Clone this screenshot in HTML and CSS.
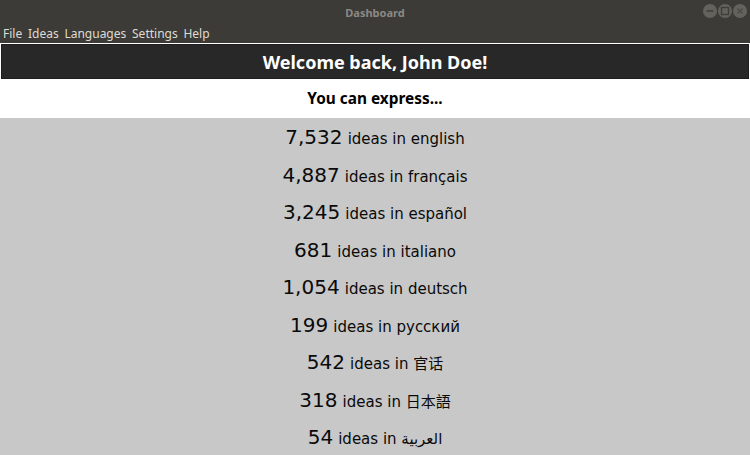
FILE: index.html
```html
<!DOCTYPE html>
<html>
<head>
<meta charset="utf-8">
<link rel="stylesheet" href="styles.css">
</head>
<body>
<div class="window">
  <div class="chrome">
    <div class="titlebar">
      <span class="title">Dashboard</span>
      <div class="controls">
        <span class="btn"><svg width="14" height="14" viewBox="0 0 14 14"><line x1="3.5" y1="7" x2="10.5" y2="7" stroke="#3e3d39" stroke-width="1.4"/></svg></span>
        <span class="btn"><svg width="14" height="14" viewBox="0 0 14 14"><rect x="3.5" y="3.5" width="7" height="7" fill="none" stroke="#3e3d39" stroke-width="1.4"/></svg></span>
        <span class="btn"><svg width="14" height="14" viewBox="0 0 14 14"><path d="M4.5 4.5 L9.5 9.5 M9.5 4.5 L4.5 9.5" stroke="#4a4945" stroke-width="1.2"/></svg></span>
      </div>
    </div>
    <div class="menubar">
      <span>File</span><span>Ideas</span><span>Languages</span><span>Settings</span><span>Help</span>
    </div>
  </div>
  <div class="content">
    <div class="welcome">Welcome back, John Doe!</div>
    <div class="express">You can express...</div>
    <div class="list">
      <div class="row"><span class="num">7,532</span> <span class="lbl">ideas in english</span></div>
      <div class="row"><span class="num">4,887</span> <span class="lbl">ideas in français</span></div>
      <div class="row"><span class="num">3,245</span> <span class="lbl">ideas in español</span></div>
      <div class="row"><span class="num">681</span> <span class="lbl">ideas in italiano</span></div>
      <div class="row"><span class="num">1,054</span> <span class="lbl">ideas in deutsch</span></div>
      <div class="row"><span class="num">199</span> <span class="lbl">ideas in русский</span></div>
      <div class="row"><span class="num">542</span> <span class="lbl">ideas in 官话</span></div>
      <div class="row"><span class="num">318</span> <span class="lbl">ideas in 日本語</span></div>
      <div class="row"><span class="num">54</span> <span class="lbl">ideas in العربية</span></div>
    </div>
  </div>
</div>
</body>
</html>
```

FILE: styles.css
```css
html, body {
  margin: 0;
  padding: 0;
  width: 750px;
  height: 455px;
  overflow: hidden;
}
.window {
  display: flex;
  flex-direction: column;
  height: 455px;
  background: #ffffff;
}
.chrome {
  background: #3c3b37;
  height: 43px;
  display: flex;
  flex-direction: column;
}
.titlebar {
  position: relative;
  height: 23px;
  display: flex;
  align-items: center;
  justify-content: center;
}
.title {
  font-family: "Noto Sans", sans-serif;
  font-weight: bold;
  font-size: 11px;
  color: #8b8984;
  padding-top: 1px;
}
.controls {
  position: absolute;
  right: 3px;
  top: 4px;
  display: flex;
  gap: 1px;
}
.btn {
  width: 14px;
  height: 14px;
  border-radius: 50%;
  background: #64625d;
  display: flex;
}
.menubar {
  display: flex;
  gap: 5.75px;
  padding-left: 3px;
  height: 20px;
  align-items: center;
  font-family: "Noto Sans", sans-serif;
  font-size: 12px;
  color: #dfdbd2;
}
.content {
  display: flex;
  flex-direction: column;
  flex: 1;
  padding-top: 1px;
}
.welcome {
  margin: 0 1px;
  height: 33px;
  border: 1px solid #1e1e1e;
  background: #282828;
  color: #ffffff;
  font-family: "Noto Sans", sans-serif;
  font-weight: bold;
  font-size: 18px;
  display: flex;
  align-items: center;
  justify-content: center;
}
.express {
  height: 39px;
  display: flex;
  align-items: center;
  justify-content: center;
  font-family: "Noto Sans", sans-serif;
  font-weight: bold;
  font-size: 15.4px;
  color: #000;
}
.list {
  flex: 1;
  background: #c8c8c8;
  display: flex;
  flex-direction: column;
  padding-top: 1px;
}
.row {
  height: 37.5px;
  line-height: 37.5px;
  text-align: center;
  font-family: "DejaVu Sans", "Noto Sans CJK SC", sans-serif;
  color: #0a0a0a;
  white-space: nowrap;
}
.num {
  font-size: 20px;
}
.lbl {
  font-size: 15px;
}
```
